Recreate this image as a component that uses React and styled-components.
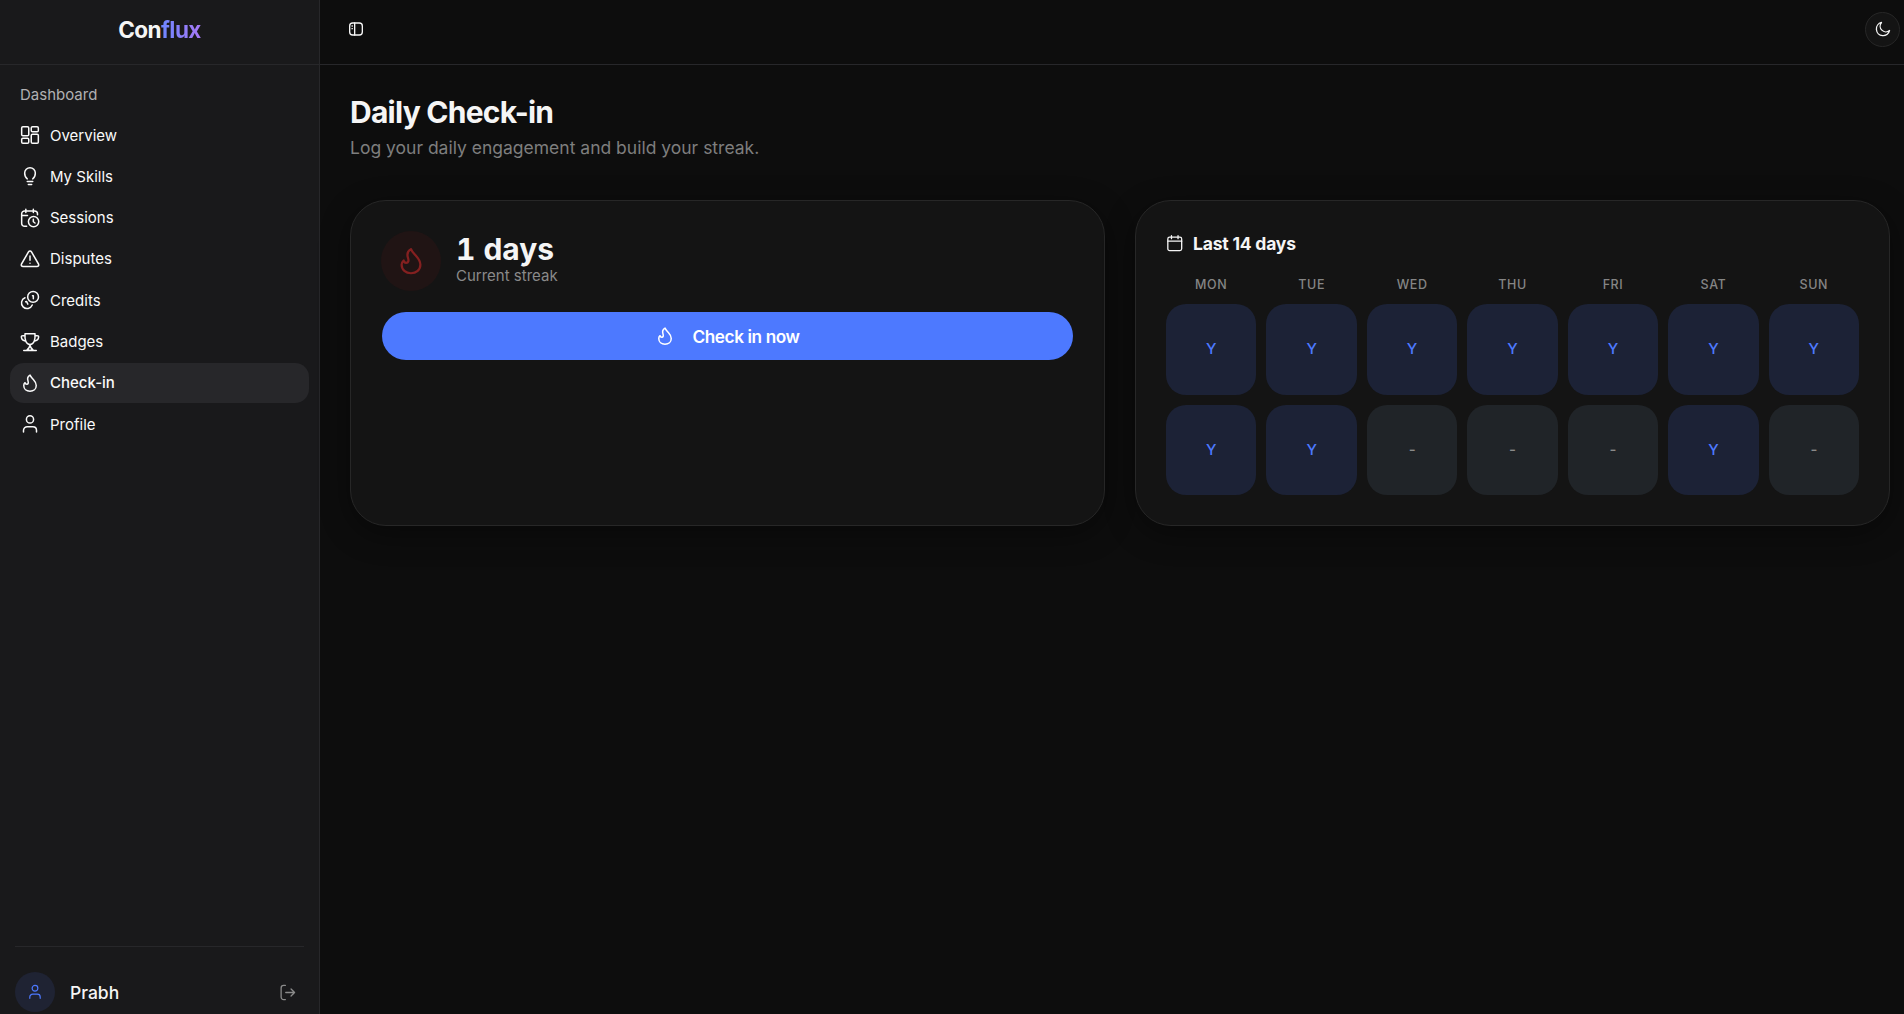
import React from "react"
import styled, { createGlobalStyle } from "styled-components"

const GlobalStyle = createGlobalStyle`
* {
    padding: 0;
    margin: 0;
    box-sizing: border-box;
}

body {
    height: 100vh;
    background-color: #0d0d0d;
    color: #f5f5f5;
    font-family: "Inter", sans-serif;
    overflow: hidden;
}
`

const Page = styled.div`
display: flex;
height: 100vh;
`

const Sidebar = styled.aside`
width: 320px;
flex-shrink: 0;
display: flex;
flex-direction: column;
background: #19191b;
border-right: 1px solid #27272a;
`

const Brand = styled.div`
height: 65px;
padding-bottom: 5px;
flex-shrink: 0;
display: flex;
align-items: center;
justify-content: center;
border-bottom: 1px solid #27272a;
font-size: 22.5px;
font-weight: 700;
letter-spacing: -0.56px;
`

const BrandAccent = styled.span`
background: linear-gradient(to right, #6e86ff, #a678f5);
background-clip: text;
color: transparent;
`

const Menu = styled.nav`
flex: 1;
padding: 10px;
display: flex;
flex-direction: column;
gap: 1.3px;
`

const MenuTitle = styled.p`
height: 38.8px;
padding: 0 10px;
line-height: 40px;
font-size: 15px;
color: #b0b0b2;
`

const MenuItem = styled.a`
height: 40px;
padding: 0 10px;
display: flex;
align-items: center;
gap: 10px;
border-radius: 14px;
font-size: 15px;
font-weight: ${(props) => (props.$active ? 500 : 400)};
color: #fafafa;
background: ${(props) => (props.$active ? "#27272a" : "transparent")};
`

const User = styled.div`
height: 68px;
margin: 0 15px;
padding: 25px 0 2px;
display: flex;
align-items: center;
gap: 15px;
border-top: 1px solid #27272a;
`

const Avatar = styled.div`
width: 40px;
height: 40px;
display: flex;
align-items: center;
justify-content: center;
border-radius: 50%;
background: #1f2333;
color: #4d79ff;
`

const UserName = styled.p`
flex: 1;
font-size: 17.5px;
font-weight: 500;
`

const Logout = styled.div`
display: flex;
margin-right: 8px;
color: #8b8b8b;
`

const Main = styled.div`
flex: 1;
`

const Header = styled.header`
height: 65px;
padding: 0 4px 6px 27.5px;
display: flex;
align-items: center;
justify-content: space-between;
border-bottom: 1px solid #27272a;
`

const ThemeButton = styled.button`
width: 35px;
height: 35px;
display: flex;
align-items: center;
justify-content: center;
border: 1px solid #272727;
border-radius: 50%;
background: #141414;
color: #f5f5f5;
`

const Content = styled.main`
padding: 28px 14px 0 30px;
`

const Title = styled.h1`
font-size: 30px;
line-height: 38px;
font-weight: 700;
letter-spacing: -0.75px;
`

const Subtitle = styled.p`
margin-top: 3px;
font-size: 17.5px;
line-height: 28px;
color: #7e7e7e;
`

const Cards = styled.div`
margin-top: 38px;
display: grid;
grid-template-columns: 1fr 1fr;
gap: 30px;
`

const Card = styled.section`
height: 326px;
padding: 30px;
border: 1px solid #272727;
border-radius: 36px;
background: #141414;
box-shadow: 0 8px 30px rgba(0, 0, 0, 0.4);
`

const Streak = styled.div`
height: 60px;
display: flex;
align-items: center;
gap: 15px;
`

const StreakIcon = styled.div`
width: 60px;
height: 60px;
display: flex;
align-items: center;
justify-content: center;
border-radius: 50%;
background: #201414;
color: #842020;
`

const StreakCount = styled.p`
font-size: 30px;
line-height: 30px;
font-weight: 700;
font-variant-numeric: tabular-nums;
`

const StreakLabel = styled.p`
font-size: 15px;
line-height: 24px;
color: #8a8a8a;
`

const CheckButton = styled.button`
width: calc(100% - 2px);
height: 48px;
margin: 21px 1px 0;
display: flex;
align-items: center;
justify-content: center;
gap: 17px;
border: none;
border-radius: 24px;
background: #4d79ff;
color: #ffffff;
font-family: inherit;
font-size: 17.2px;
font-weight: 600;
letter-spacing: -0.4px;
`

const CardTitle = styled.h2`
height: 25px;
display: flex;
align-items: center;
gap: 9.5px;
font-size: 17.5px;
font-weight: 700;
letter-spacing: -0.2px;
`

const Calendar = styled.div`
margin-top: 19.300px;
display: grid;
grid-template-columns: repeat(7, 1fr);
column-gap: 10px;
`

const WeekDay = styled.span`
height: 29px;
line-height: 20px;
text-align: center;
font-size: 12.5px;
font-weight: 500;
letter-spacing: 0.6px;
color: #858585;
`

const Day = styled.div`
aspect-ratio: 1;
margin-bottom: 10px;
display: flex;
align-items: center;
justify-content: center;
border-radius: 20px;
font-size: 15px;
font-weight: 500;
line-height: 20px;
padding-bottom: 0.5px;
background: ${(props) => (props.$checked ? "#1c2236" : "#202428")};
color: ${(props) => (props.$checked ? "#4d79ff" : "#8a8a8a")};
`

const Svg = ({ size = 20, stroke = 1.8, children }) => (
    <svg width={size} height={size} viewBox="0 0 24 24" fill="none" stroke="currentColor"
        strokeWidth={stroke} strokeLinecap="round" strokeLinejoin="round">
        {children}
    </svg>
)

const flame = <path d="M12 2.500C9.300 4 8.600 6.500 9.600 9.500C10.300 11.700 10 13.500 8.200 13.500C6.900 13.500 6.300 12.700 6.100 11.600C5 12.600 4.500 13.900 4.500 15C4.500 19 7.800 21.800 12 21.800S19.500 19 19.500 15C19.500 11.800 17.700 9.700 15.800 7.600C14.300 5.900 12.700 4.500 12 2.500Z" />
const person = (
    <>
        <circle cx="12" cy="6.500" r="4.300" />
        <path d="M4.200 21.500v-2c0-2.500 2-4.300 4.500-4.300h6.600c2.500 0 4.500 1.800 4.500 4.300v2" />
    </>
)

const menu = [
    {
        name: "Overview",
        icon: (
            <>
                <rect x="2" y="2" width="8.500" height="11" rx="1.500" />
                <rect x="13.500" y="2" width="8.500" height="6" rx="1.500" />
                <rect x="2" y="16" width="8.500" height="6" rx="1.500" />
                <rect x="13.500" y="11" width="8.500" height="11" rx="1.500" />
            </>
        )
    },
    {
        name: "My Skills",
        icon: <path d="M8.700 15.500C6.900 14.200 5.600 11.500 5.600 8.400a6.400 6.400 0 0 1 12.800 0c0 3.100-1.300 5.800-3.100 7.100M8.700 18.700h6.600M10 22.300h4" />
    },
    {
        name: "Sessions",
        icon: (
            <>
                <path d="M7 1.500v4M16 1.500v4M2 9h7M21 8V7a3.500 3.500 0 0 0-3.500-3.500h-12A3.500 3.500 0 0 0 2 7v11.500A3.500 3.500 0 0 0 5.500 22H8" />
                <circle cx="16.300" cy="16.300" r="6.200" />
                <path d="M16 13.500V16.500l2 1.500" />
            </>
        )
    },
    {
        name: "Disputes",
        icon: <path d="M10.200 3.500 1.800 18c-.8 1.600.1 3 1.900 3h16.600c1.800 0 2.700-1.400 1.900-3L13.800 3.500c-.9-1.500-2.700-1.500-3.600 0ZM12 8.500v5M12 17v.1" />
    },
    {
        name: "Credits",
        icon: (
            <>
                <circle cx="15.700" cy="8.300" r="6.500" />
                <path d="M15 7h1v3.500M6 9.300A6.700 6.700 0 1 0 14.700 18M6.800 14l1-.3 1.600 3.300" />
            </>
        )
    },
    {
        name: "Badges",
        icon: <path d="M6 2h12c.5 7-1 13-6 13S5.500 9 6 2ZM6 4.500H3.500C2 4.500 1.500 5 1.700 6.500 2 9 4 10.500 7 11M18 4.500h2.500c1.500 0 2 .5 1.800 2C22 9 20 10.500 17 11M12 15c0 3-1.500 5-4 7h8c-2.500-2-4-4-4-7M4.500 22.300h15" />
    },
    { name: "Check-in", icon: flame },
    { name: "Profile", icon: person }
]

const weekDays = ["MON", "TUE", "WED", "THU", "FRI", "SAT", "SUN"]
const days = ["Y", "Y", "Y", "Y", "Y", "Y", "Y", "Y", "Y", "-", "-", "-", "Y", "-"]

export default function App() {
    return (
        <Page>
            <GlobalStyle />
            <Sidebar>
                <Brand>
                    <span>Con<BrandAccent>flux</BrandAccent></span>
                </Brand>
                <Menu>
                    <MenuTitle>Dashboard</MenuTitle>
                    {menu.map((item) => (
                        <MenuItem key={item.name} $active={item.name === "Check-in"}>
                            <Svg>{item.icon}</Svg>
                            {item.name}
                        </MenuItem>
                    ))}
                </Menu>
                <User>
                    <Avatar>
                        <Svg size={16}>{person}</Svg>
                    </Avatar>
                    <UserName>Prabh</UserName>
                    <Logout>
                        <Svg size={17}>
                            <path d="M9 2H6.500A3.500 3.500 0 0 0 3 5.500v13A3.500 3.500 0 0 0 6.500 22H9M9.500 12H22M17 7l5 5-5 5" />
                        </Svg>
                    </Logout>
                </User>
            </Sidebar>
            <Main>
                <Header>
                    <Svg size={16} stroke={2}>
                        <rect x="2.500" y="3" width="19" height="18" rx="4.500" />
                        <path d="M10 3v18M6 7.500h.5M6 11.500h.5" />
                    </Svg>
                    <ThemeButton>
                        <Svg size={16} stroke={2}>
                            <path d="M21.800 14.300A8.600 8.600 0 0 1 9.700 2.200 10 10 0 1 0 21.800 14.300Z" />
                        </Svg>
                    </ThemeButton>
                </Header>
                <Content>
                    <Title>Daily Check-in</Title>
                    <Subtitle>Log your daily engagement and build your streak.</Subtitle>
                    <Cards>
                        <Card>
                            <Streak>
                                <StreakIcon>
                                    <Svg size={30}>{flame}</Svg>
                                </StreakIcon>
                                <div>
                                    <StreakCount>1 days</StreakCount>
                                    <StreakLabel>Current streak</StreakLabel>
                                </div>
                            </Streak>
                            <CheckButton>
                                <Svg>{flame}</Svg>
                                Check in now
                            </CheckButton>
                        </Card>
                        <Card>
                            <CardTitle>
                                <Svg size={17.5}>
                                    <path d="M7.500 1v4M16.500 1v4M2.500 8.500h19" />
                                    <rect x="2.500" y="3" width="19" height="18.500" rx="2.500" />
                                </Svg>
                                Last 14 days
                            </CardTitle>
                            <Calendar>
                                {weekDays.map((day) => (
                                    <WeekDay key={day}>{day}</WeekDay>
                                ))}
                                {days.map((day, index) => (
                                    <Day key={index} $checked={day === "Y"}>{day}</Day>
                                ))}
                            </Calendar>
                        </Card>
                    </Cards>
                </Content>
            </Main>
        </Page>
    )
}
